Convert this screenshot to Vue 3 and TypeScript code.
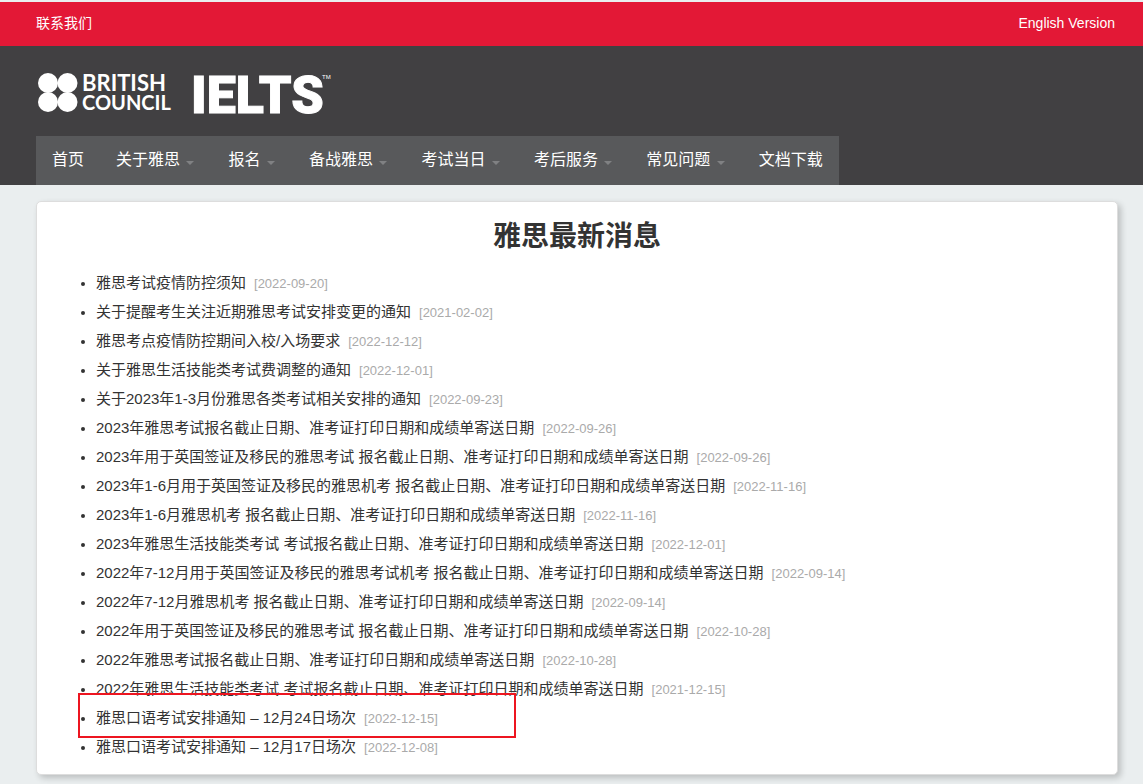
<script setup lang="ts">
interface NavItem {
  label: string
  hasMenu: boolean
}

interface NewsItem {
  title: string
  date: string
  marked?: boolean
}

const navItems: NavItem[] = [
  { label: '首页', hasMenu: false },
  { label: '关于雅思', hasMenu: true },
  { label: '报名', hasMenu: true },
  { label: '备战雅思', hasMenu: true },
  { label: '考试当日', hasMenu: true },
  { label: '考后服务', hasMenu: true },
  { label: '常见问题', hasMenu: true },
  { label: '文档下载', hasMenu: false },
]

const news: NewsItem[] = [
  { title: '雅思考试疫情防控须知', date: '2022-09-20' },
  { title: '关于提醒考生关注近期雅思考试安排变更的通知', date: '2021-02-02' },
  { title: '雅思考点疫情防控期间入校/入场要求', date: '2022-12-12' },
  { title: '关于雅思生活技能类考试费调整的通知', date: '2022-12-01' },
  { title: '关于2023年1-3月份雅思各类考试相关安排的通知', date: '2022-09-23' },
  { title: '2023年雅思考试报名截止日期、准考证打印日期和成绩单寄送日期', date: '2022-09-26' },
  { title: '2023年用于英国签证及移民的雅思考试 报名截止日期、准考证打印日期和成绩单寄送日期', date: '2022-09-26' },
  { title: '2023年1-6月用于英国签证及移民的雅思机考 报名截止日期、准考证打印日期和成绩单寄送日期', date: '2022-11-16' },
  { title: '2023年1-6月雅思机考 报名截止日期、准考证打印日期和成绩单寄送日期', date: '2022-11-16' },
  { title: '2023年雅思生活技能类考试 考试报名截止日期、准考证打印日期和成绩单寄送日期', date: '2022-12-01' },
  { title: '2022年7-12月用于英国签证及移民的雅思考试机考 报名截止日期、准考证打印日期和成绩单寄送日期', date: '2022-09-14' },
  { title: '2022年7-12月雅思机考 报名截止日期、准考证打印日期和成绩单寄送日期', date: '2022-09-14' },
  { title: '2022年用于英国签证及移民的雅思考试 报名截止日期、准考证打印日期和成绩单寄送日期', date: '2022-10-28' },
  { title: '2022年雅思考试报名截止日期、准考证打印日期和成绩单寄送日期', date: '2022-10-28' },
  { title: '2022年雅思生活技能类考试 考试报名截止日期、准考证打印日期和成绩单寄送日期', date: '2021-12-15' },
  { title: '雅思口语考试安排通知 – 12月24日场次', date: '2022-12-15', marked: true },
  { title: '雅思口语考试安排通知 – 12月17日场次', date: '2022-12-08' },
]
</script>

<template>
  <div class="page">
    <div class="topbar">
      <a href="#contact">联系我们</a>
      <a href="#english">English Version</a>
    </div>

    <header class="header">
      <a class="logo" href="#home" aria-label="British Council IELTS">
        <svg width="300" height="64" viewBox="0 0 300 64" fill="#fff" aria-hidden="true">
          <circle cx="12" cy="19" r="10" />
          <circle cx="31.5" cy="19" r="10" />
          <circle cx="12" cy="38" r="10" />
          <circle cx="31.5" cy="38" r="10" />
          <text class="council" x="46" y="27" font-size="22">BRITISH</text>
          <text class="council" x="46" y="46" font-size="20">COUNCIL</text>
          <text class="ielts" x="155" y="49" font-size="52">IELTS</text>
          <text class="tm" x="286" y="15" font-size="6">TM</text>
        </svg>
      </a>
      <nav class="nav">
        <a v-for="item in navItems" :key="item.label" href="#menu">{{ item.label }}<template v-if="item.hasMenu">&nbsp;<span class="caret"></span></template></a>
      </nav>
    </header>

    <main class="card">
      <h1>雅思最新消息</h1>
      <ul class="news">
        <li v-for="item in news" :key="item.title">
          <a href="#news">{{ item.title }}</a><span class="date">[{{ item.date }}]</span>
          <span v-if="item.marked" class="marker"></span>
        </li>
      </ul>
    </main>
  </div>
</template>

<style>
body {
  margin: 0;
  background: #eaeeef;
}
</style>

<style scoped>
.page {
  box-sizing: border-box;
  min-height: 100vh;
  padding: 2px 0 9px;
  background: #eaeeef;
  color: #333;
  font-family: "Liberation Sans", "Noto Sans CJK SC", sans-serif;
}

a {
  color: inherit;
  text-decoration: none;
}

.topbar {
  display: flex;
  align-items: baseline;
  justify-content: space-between;
  height: 44px;
  padding: 0 28px 0 36px;
  box-sizing: border-box;
  background: #e31836;
  color: #fff;
  font-size: 14px;
  line-height: 42px;
}

.header {
  display: flex;
  flex-direction: column;
  align-items: flex-start;
  gap: 8px;
  padding: 18px 25px 0 36px;
  background: #414042;
}

.logo,
.logo svg {
  display: block;
}

.council {
  font-family: Lato, sans-serif;
  font-weight: 700;
}

.ielts {
  font-family: Roboto, sans-serif;
  font-weight: 900;
  stroke: #fff;
  stroke-width: 1px;
}

.tm {
  font-family: "Liberation Sans", sans-serif;
}

.nav {
  display: flex;
  background: #58595b;
  color: #fff;
  font-size: 16px;
  line-height: 47px;
}

.nav a {
  padding: 0 16px 2px;
  white-space: nowrap;
}

.caret {
  display: inline-block;
  margin: 0 2px;
  border: 4px solid transparent;
  border-top-color: #808183;
  border-bottom: 0;
}

.card {
  margin: 16px 25px 0 36px;
  padding: 15px 20px 13px;
  border: 1px solid #ddd;
  border-radius: 5px;
  background: #fff;
  box-shadow: 3px 3px 6px rgba(0, 0, 0, 0.2);
}

h1 {
  margin: 0 0 11px;
  font-size: 28px;
  line-height: 40px;
  text-align: center;
}

.news {
  margin: 0;
  padding-left: 39px;
  font-size: 15px;
  line-height: 29px;
  list-style: none;
}

.news li {
  position: relative;
}

.news li::before {
  display: inline-block;
  width: 4px;
  height: 4px;
  margin: 0 11px 0 -15px;
  border-radius: 50%;
  background: #333;
  vertical-align: 2px;
  content: "";
}

.date {
  margin-left: 8px;
  color: #aaa;
  font-size: 13px;
  line-height: 1;
}

.marker {
  position: absolute;
  top: -10px;
  left: -18px;
  box-sizing: border-box;
  width: 438px;
  height: 45px;
  border: 2px solid #ed1520;
}
</style>
